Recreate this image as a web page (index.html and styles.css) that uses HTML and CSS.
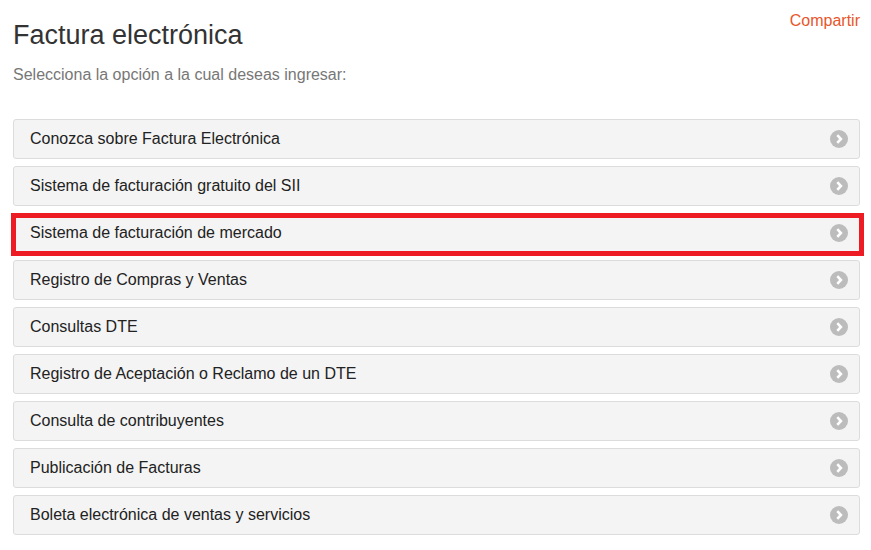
FILE: index.html
```html
<!DOCTYPE html>
<html lang="es">
<head>
<meta charset="utf-8">
<title>Factura electrónica</title>
<link rel="stylesheet" href="styles.css">
</head>
<body>
<div class="page">
  <div class="header">
    <div class="heading">
      <h1 class="title">Factura electrónica</h1>
      <p class="subtitle">Selecciona la opción a la cual deseas ingresar:</p>
    </div>
    <a class="share" href="#">Compartir</a>
  </div>
  <ul class="menu">
    <li class="item"><span>Conozca sobre Factura Electrónica</span><svg class="arrow" viewBox="0 0 18 18"><circle cx="9" cy="9" r="9"/><path d="M7.3 5.2 L10.9 9 L7.3 12.8"/></svg></li>
    <li class="item"><span>Sistema de facturación gratuito del SII</span><svg class="arrow" viewBox="0 0 18 18"><circle cx="9" cy="9" r="9"/><path d="M7.3 5.2 L10.9 9 L7.3 12.8"/></svg></li>
    <li class="item highlight"><span>Sistema de facturación de mercado</span><svg class="arrow" viewBox="0 0 18 18"><circle cx="9" cy="9" r="9"/><path d="M7.3 5.2 L10.9 9 L7.3 12.8"/></svg></li>
    <li class="item"><span>Registro de Compras y Ventas</span><svg class="arrow" viewBox="0 0 18 18"><circle cx="9" cy="9" r="9"/><path d="M7.3 5.2 L10.9 9 L7.3 12.8"/></svg></li>
    <li class="item"><span>Consultas DTE</span><svg class="arrow" viewBox="0 0 18 18"><circle cx="9" cy="9" r="9"/><path d="M7.3 5.2 L10.9 9 L7.3 12.8"/></svg></li>
    <li class="item"><span>Registro de Aceptación o Reclamo de un DTE</span><svg class="arrow" viewBox="0 0 18 18"><circle cx="9" cy="9" r="9"/><path d="M7.3 5.2 L10.9 9 L7.3 12.8"/></svg></li>
    <li class="item"><span>Consulta de contribuyentes</span><svg class="arrow" viewBox="0 0 18 18"><circle cx="9" cy="9" r="9"/><path d="M7.3 5.2 L10.9 9 L7.3 12.8"/></svg></li>
    <li class="item"><span>Publicación de Facturas</span><svg class="arrow" viewBox="0 0 18 18"><circle cx="9" cy="9" r="9"/><path d="M7.3 5.2 L10.9 9 L7.3 12.8"/></svg></li>
    <li class="item"><span>Boleta electrónica de ventas y servicios</span><svg class="arrow" viewBox="0 0 18 18"><circle cx="9" cy="9" r="9"/><path d="M7.3 5.2 L10.9 9 L7.3 12.8"/></svg></li>
  </ul>
</div>
</body>
</html>
```

FILE: styles.css
```css
* { box-sizing: border-box; }
html, body {
  margin: 0;
  padding: 0;
  background: #fff;
}
body {
  font-family: "Liberation Sans", Arial, sans-serif;
  color: #333;
}
.page {
  padding: 0 11px 0 13px;
}
.header {
  display: flex;
  justify-content: space-between;
  align-items: flex-start;
}
.title {
  margin: 19px 0 0;
  font-size: 27px;
  line-height: 32px;
  font-weight: normal;
  color: #333;
}
.subtitle {
  margin: 14px 0 0;
  font-size: 16px;
  line-height: 20px;
  color: #777;
}
.share {
  margin-top: 12px;
  font-size: 16px;
  line-height: 18px;
  color: #e8562a;
  text-decoration: none;
}
.menu {
  list-style: none;
  margin: 34px 0 0;
  padding: 0;
  display: flex;
  flex-direction: column;
  gap: 7px;
}
.item {
  position: relative;
  display: flex;
  align-items: center;
  justify-content: space-between;
  height: 40px;
  padding: 9px 11px 9px 16px;
  background: #f4f4f4;
  border: 1px solid #dcdcdc;
  border-radius: 3px;
  font-size: 16px;
  line-height: 20px;
  color: #222;
}
.arrow {
  width: 18px;
  height: 18px;
  flex: none;
}
.arrow circle {
  fill: #bcbcbc;
}
.arrow path {
  fill: none;
  stroke: #fff;
  stroke-width: 2.6;
  stroke-linecap: butt;
  stroke-linejoin: miter;
}
.highlight::after {
  content: "";
  position: absolute;
  left: -3px;
  right: -5px;
  top: -1px;
  bottom: -4px;
  border: 5px solid #ed1c24;
  pointer-events: none;
}
```
